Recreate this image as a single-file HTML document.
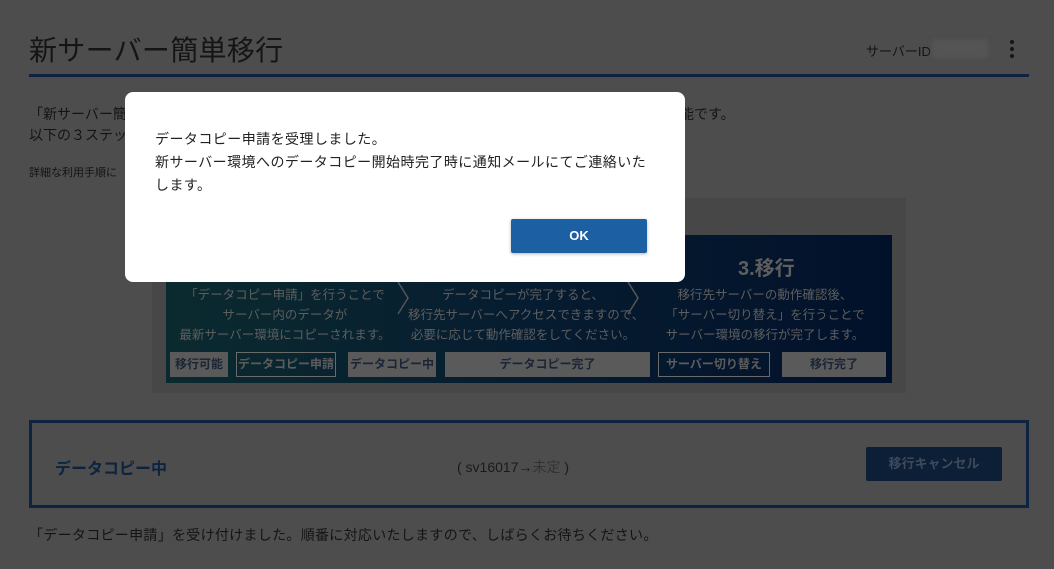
<!DOCTYPE html>
<html style="background:#4d4d4d"><head><meta charset="utf-8"><style>
*{margin:0;padding:0;box-sizing:border-box}
html,body{background:#4d4d4d}
body{width:1054px;height:569px;font-family:"Liberation Sans","Noto Sans CJK JP",sans-serif;color:#141414;position:relative;overflow:hidden}
.a{position:absolute;white-space:nowrap}
.dlg{position:absolute;left:125px;top:92px;width:560px;height:190px;background:#fff;border-radius:8px}
.box{position:absolute;left:166px;top:235px;width:726px;height:148px;background:linear-gradient(90deg,#0b2a2f,#061c30 50%,#02112a)}
.st{position:absolute;top:352px;height:25px;font-size:12px;font-weight:bold;color:#1a2535;text-align:center;line-height:25px}
.f{background:#5a5a5a}
.o{border:1px solid #6a6a6a;color:#5c5c5c;line-height:23px}
.c{font-size:12.5px;color:#5e5e5e;text-align:center;line-height:20px}
</style></head><body>
<div class="a" style="left:29px;top:29px;font-size:28px;color:#151515;letter-spacing:.3px">新サーバー簡単移行</div>
<div class="a" style="left:866px;top:41px;font-size:13px">サーバーID</div>
<div class="a" style="left:932px;top:40px;width:56px;height:18px;background:#555;filter:blur(2px)"></div>
<div class="a" style="left:1010px;top:40px;width:4px;height:4px;border-radius:50%;background:#151515;box-shadow:0 7px 0 #151515,0 14px 0 #151515"></div>
<div class="a" style="left:29px;top:74px;width:1000px;height:3px;background:#0e2340"></div>
<div class="a" style="left:29px;top:104px;font-size:14px">「新サーバー簡単移行</div>
<div class="a" style="left:680px;top:104px;font-size:14px">能です。</div>
<div class="a" style="left:29px;top:125px;font-size:14px">以下の３ステップ</div>
<div class="a" style="left:29px;top:164px;font-size:11px">詳細な利用手順に</div>
<div class="a" style="left:152px;top:198px;width:754px;height:195px;background:#474747"></div>
<div class="box"></div>
<div class="a" style="left:738px;top:252px;font-size:20px;font-weight:bold;color:#5e5e5e">3.移行</div>
<div class="a c" style="left:170px;top:285px;width:230px">「データコピー申請」を行うことで<br>サーバー内のデータが<br>最新サーバー環境にコピーされます。</div>
<div class="a c" style="left:408px;top:285px;width:230px">データコピーが完了すると、<br>移行先サーバーへアクセスできますので、<br>必要に応じて動作確認をしてください。</div>
<div class="a c" style="left:650px;top:285px;width:230px">移行先サーバーの動作確認後、<br>「サーバー切り替え」を行うことで<br>サーバー環境の移行が完了します。</div>
<svg class="a" style="left:396px;top:280px" width="250" height="40"><path d="M2 2 L12 18 L2 34 M232 2 L242 18 L232 34" stroke="#555" stroke-width="1.5" fill="none"/></svg>
<div class="st f" style="left:170px;width:58px">移行可能</div>
<div class="st o" style="left:236px;width:100px">データコピー申請</div>
<div class="st f" style="left:348px;width:88px">データコピー中</div>
<div class="st f" style="left:445px;width:205px">データコピー完了</div>
<div class="st o" style="left:658px;width:112px">サーバー切り替え</div>
<div class="st f" style="left:782px;width:104px">移行完了</div>
<div class="a" style="left:29px;top:420px;width:1000px;height:88px;border:3px solid #0e2340"></div>
<div class="a" style="left:55px;top:455px;font-size:16px;font-weight:bold;color:#0e2340">データコピー中</div>
<div class="a" style="left:457px;top:457px;font-size:14px;color:#1a1a1a">( sv16017→<span style="color:#333">未定</span> )</div>
<div class="a" style="left:866px;top:447px;width:136px;height:34px;background:#0c1f37;color:#3e4a5a;font-size:13px;font-weight:bold;text-align:center;line-height:34px;border-radius:2px">移行キャンセル</div>
<div class="a" style="left:29px;top:525px;font-size:14px;letter-spacing:.3px">「データコピー申請」を受け付けました。順番に対応いたしますので、しばらくお待ちください。</div>
<div class="dlg">
<div class="a" style="left:30px;top:36px;font-size:14px;line-height:23px;color:#222;letter-spacing:.45px">データコピー申請を受理しました。<br>新サーバー環境へのデータコピー開始時完了時に通知メールにてご連絡いた<br>します。</div>
<div class="a" style="left:386px;top:127px;width:136px;height:34px;background:#1d5fa3;color:#fff;font-size:13px;font-weight:bold;text-align:center;line-height:34px;border-radius:2px;box-shadow:0 1px 3px rgba(0,0,0,.3)">OK</div>
</div>
</body></html>
